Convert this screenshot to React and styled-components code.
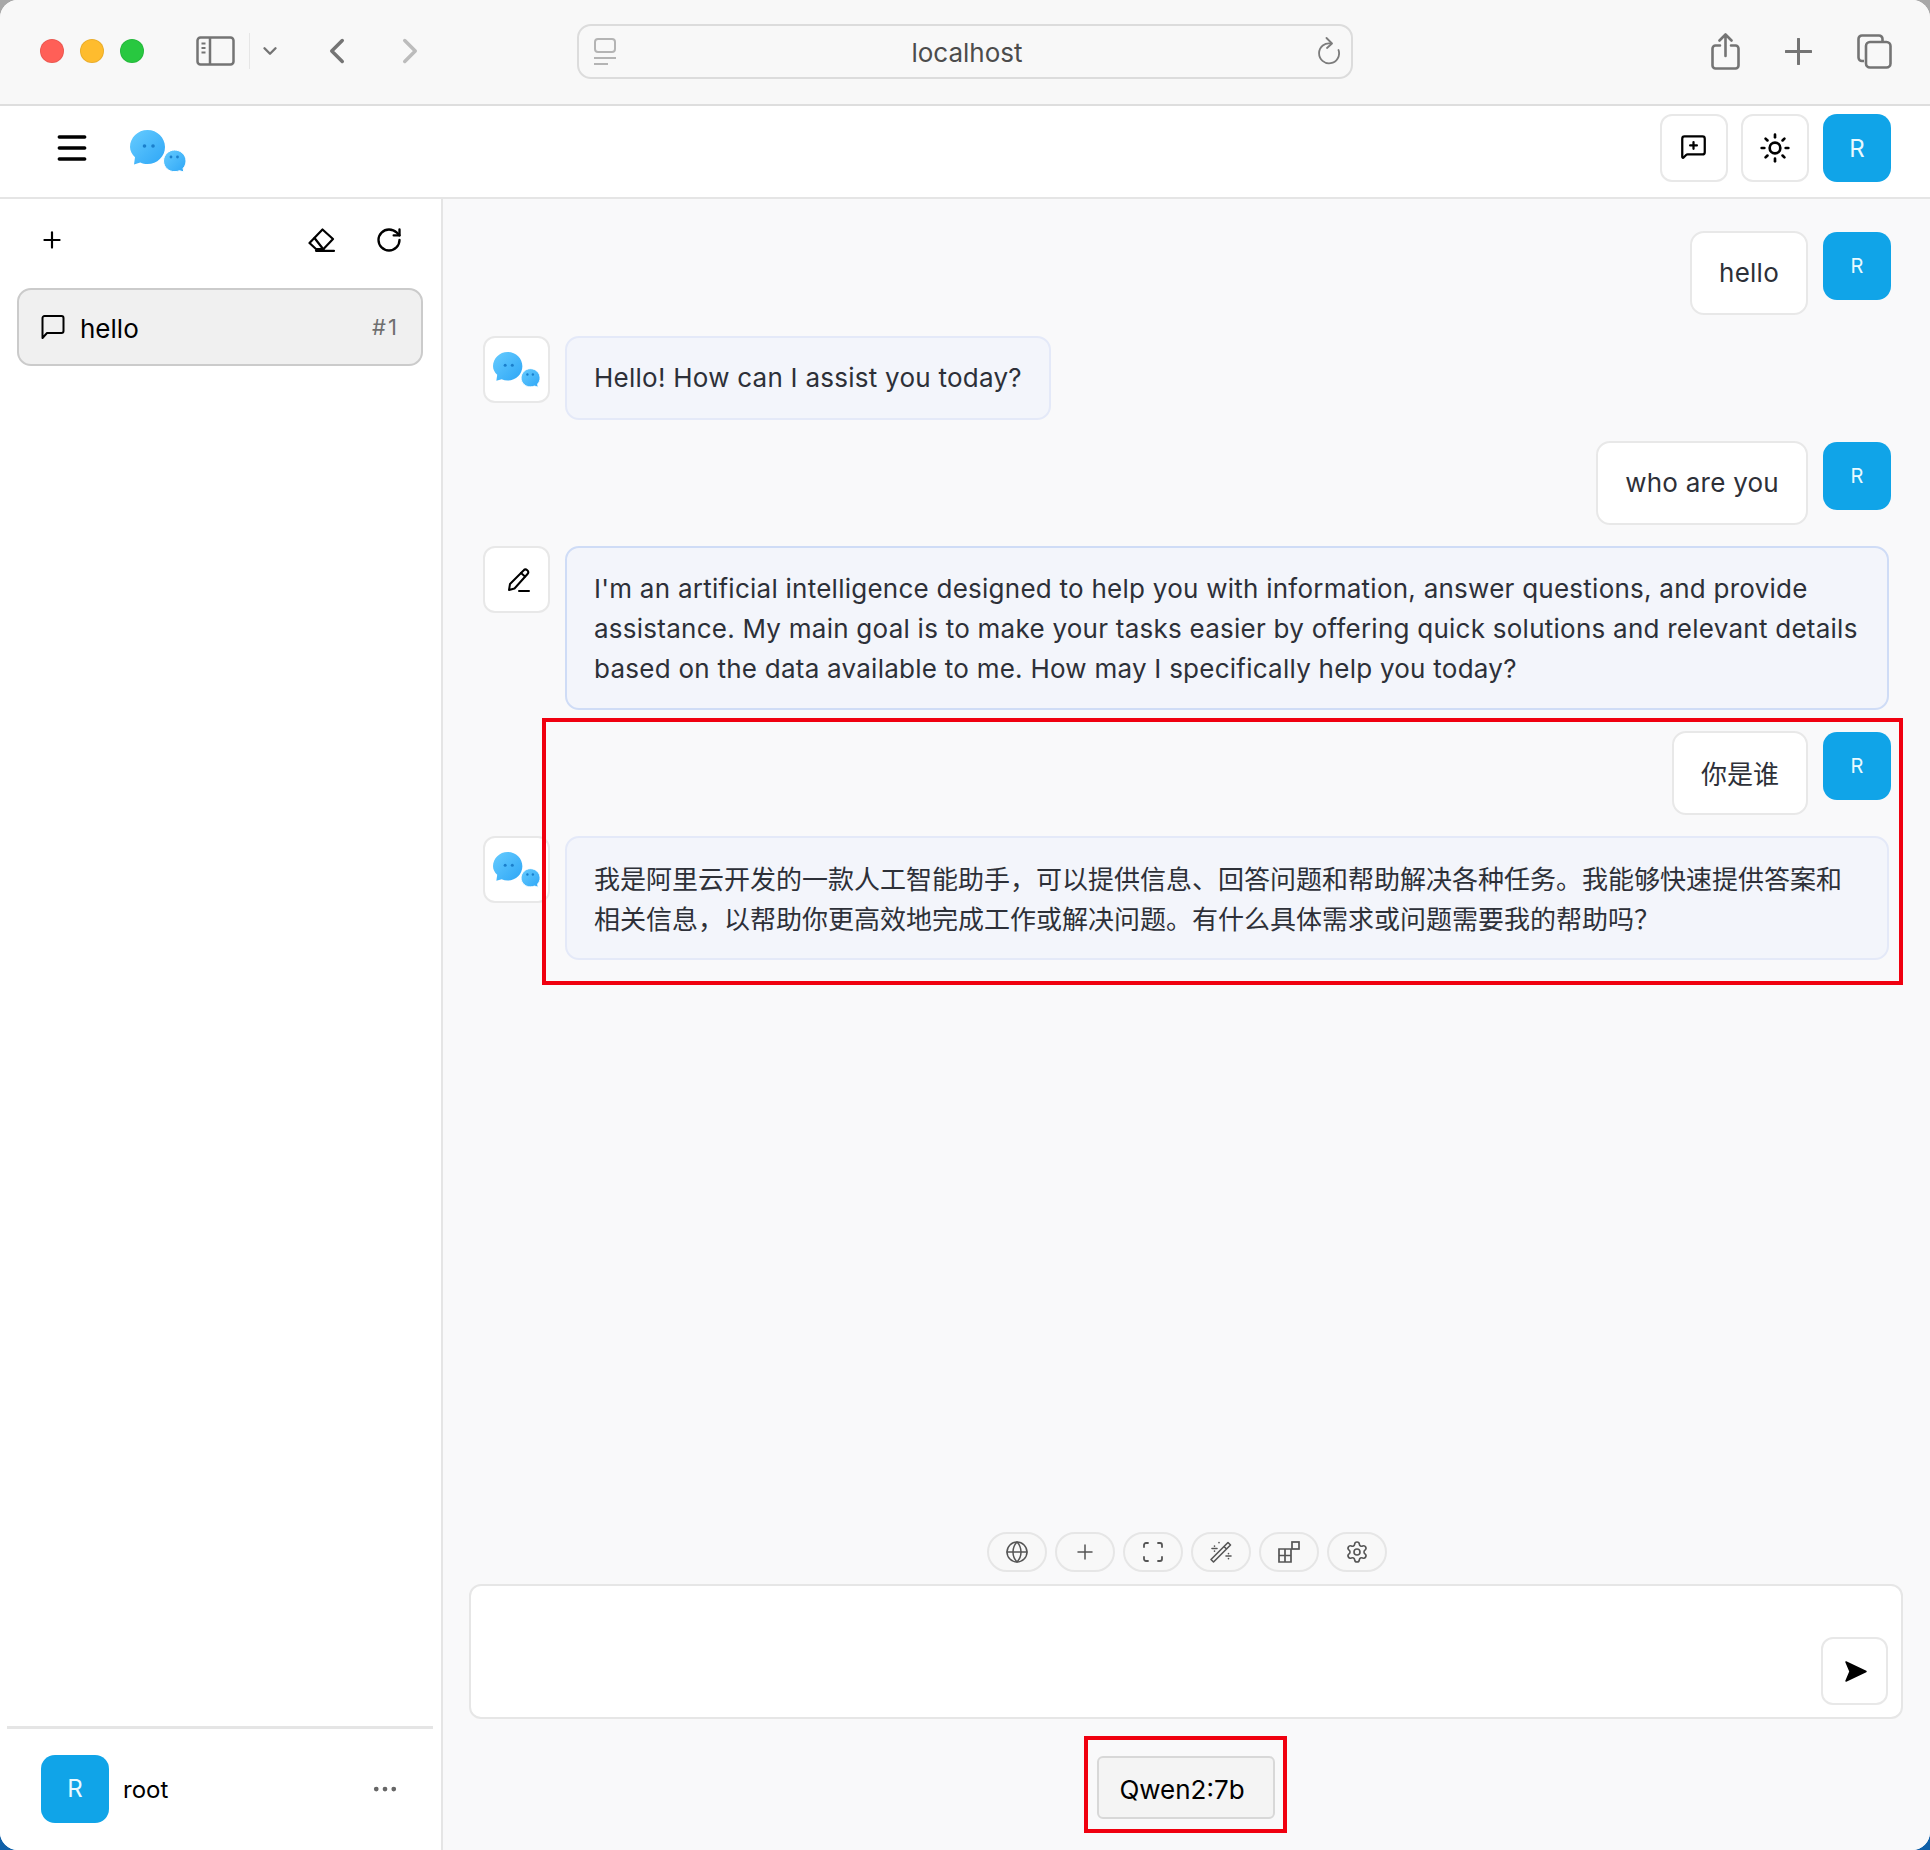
import React, { useId } from 'react';
import styled, { createGlobalStyle } from 'styled-components';
import {
  ChevronDown,
  ChevronLeft,
  ChevronRight,
  Ellipsis,
  Globe,
  Menu,
  MessageSquarePlus,
  Plus,
  RotateCw,
  Scan,
  Settings,
  Sun,
} from 'lucide-react';

const GlobalStyle = createGlobalStyle`
  html, body {
    margin: 0;
    padding: 0;
    height: 1850px;
    background: linear-gradient(#a8a8a8 0 50%, #0f5fa8 50% 100%);
  }
  * {
    box-sizing: border-box;
  }
`;

const Window = styled.div`
  position: relative;
  display: flex;
  flex-direction: column;
  width: 1930px;
  height: 1850px;
  border-radius: 18px;
  overflow: hidden;
  background: #fff;
  font-family: Inter, "Noto Sans CJK SC", sans-serif;
  color: #2d3038;
`;

const TitleBar = styled.div`
  display: flex;
  align-items: center;
  flex: none;
  height: 106px;
  padding: 0 0 2px 40px;
  background: #f8f8f8;
  border-bottom: 2px solid #dedede;
  color: #747474;
`;

const Light = styled.span`
  width: 24px;
  height: 24px;
  margin-right: 16px;
  border-radius: 50%;
  background: ${(p) => p.$color};
  border: 1px solid rgba(0, 0, 0, 0.08);
`;

const BarIcon = styled.span`
  display: flex;
  flex: none;
  margin-left: ${(p) => p.$left || 0}px;
  color: ${(p) => p.$color || 'inherit'};
`;

const VDivider = styled.span`
  width: 1px;
  height: 36px;
  margin-left: 14px;
  background: #e6e6e6;
`;

const AddressBar = styled.div`
  display: flex;
  align-items: center;
  justify-content: space-between;
  flex: none;
  position: relative;
  width: 776px;
  height: 55px;
  margin-left: 151px;
  padding: 0 11px 0 15px;
  border: 2px solid #dcdcdc;
  border-radius: 14px;
  color: #b4b4b4;
`;

const Address = styled.span`
  padding-top: 2px;
  font-size: 26px;
  color: #4c4c4c;
`;

const Header = styled.div`
  display: flex;
  align-items: flex-start;
  flex: none;
  height: 93px;
  padding: 8px 39px 0 56px;
  border-bottom: 2px solid #e5e5e5;
  background: #fff;
`;

const MenuButton = styled.span`
  display: flex;
  margin-top: 15px;
  color: #000;
`;

const HeaderLogo = styled.span`
  display: flex;
  margin: 16px auto 0 42px;
`;

const SquareButton = styled.button`
  display: flex;
  align-items: center;
  justify-content: center;
  flex: none;
  width: ${(p) => p.$w || 68}px;
  height: 68px;
  margin-right: ${(p) => p.$right || 0}px;
  padding: 0;
  border: 2px solid #e8e8e8;
  border-radius: 12px;
  background: ${(p) => p.$bg || '#fff'};
  color: #000;
`;

const Avatar = styled.div`
  display: flex;
  align-items: center;
  justify-content: center;
  flex: none;
  width: 68px;
  height: 68px;
  border-radius: 14px;
  background: #10a4e8;
  color: #eafaff;
  font-size: ${(p) => p.$size || 24}px;
`;

const Body = styled.div`
  display: flex;
  flex: 1;
  min-height: 0;
`;

const Sidebar = styled.aside`
  display: flex;
  flex-direction: column;
  flex: none;
  width: 443px;
  border-right: 2px solid #e5e5e5;
  background: #fff;
`;

const SideTools = styled.div`
  display: flex;
  align-items: center;
  height: 89px;
  padding: 0 39px 8px 39px;
  color: #000;
`;

const SideTool = styled.span`
  display: flex;
  margin-left: ${(p) => p.$left || 0}px;
`;

const ChatItem = styled.div`
  display: flex;
  align-items: center;
  height: 78px;
  margin: 0 18px 0 17px;
  padding: 0 22px;
  border: 2px solid #cbcbcb;
  border-radius: 14px;
  background: #f0f0f0;
  color: #000;
`;

const ChatName = styled.span`
  margin: 3px 0 0 15px;
  font-size: 26px;
  flex: 1;
`;

const ChatNumber = styled.span`
  font-size: 22px;
  letter-spacing: 2px;
  color: #6f6f6f;
`;

const SideFooter = styled.div`
  display: flex;
  align-items: center;
  margin: auto 8px 0 7px;
  height: 124px;
  padding: 0 33px 2px 34px;
  border-top: 3px solid #e5e5e5;
`;

const UserName = styled.span`
  flex: 1;
  margin: 2px 0 0 14px;
  font-size: 24px;
  color: #000;
`;

const Main = styled.main`
  display: flex;
  flex-direction: column;
  flex: 1;
  min-width: 0;
  background: #f9f9fa;
`;

const MessageList = styled.div`
  display: flex;
  flex-direction: column;
  flex: 1;
  gap: 21px;
  padding: 32px 39px 0 40px;
`;

const Row = styled.div`
  display: flex;
  align-items: flex-start;
  gap: 15px;
  justify-content: ${(p) => (p.$user ? 'flex-end' : 'flex-start')};

  ${Avatar} {
    margin-top: 1px;
  }
`;

const Bubble = styled.div`
  padding: ${(p) => (p.$cjk ? '22px 27px 18px' : p.$wide ? '21px 27px 19px' : '20px 27px')};
  font-size: 26px;
  line-height: 40px;
  letter-spacing: ${(p) => (p.$cjk ? 0 : 0.25)}px;
  border-radius: 14px;
  border: 2px solid ${(p) => (p.$user ? '#e8e8e8' : p.$strong ? '#cfdcf6' : '#e4e9f8')};
  background: ${(p) => (p.$user ? '#fff' : '#f3f5fb')};
  flex: ${(p) => (p.$wide ? 1 : 'none')};
  margin-right: ${(p) => (p.$wide ? 2 : 0)}px;
`;

const BotAvatar = styled.div`
  display: flex;
  align-items: center;
  justify-content: center;
  flex: none;
  width: 67px;
  height: 67px;
  border: 2px solid #e8e8e8;
  border-radius: 12px;
  background: #fff;
  color: #000;
`;

const PencilGlyph = styled.span`
  display: flex;
  margin-left: 4px;
`;

const Composer = styled.div`
  display: flex;
  flex-direction: column;
  align-items: center;
  flex: none;
  padding: 0 27px 31px 26px;
`;

const Pills = styled.div`
  display: flex;
  gap: 8px;
  margin: 0 0 12px 1px;
`;

const Pill = styled.button`
  display: flex;
  align-items: center;
  justify-content: center;
  width: 60px;
  height: 40px;
  padding: 0 0 0 1px;
  border: 2px solid #e6e6e6;
  border-radius: 20px;
  background: #f8f8f8;
  color: #555;
`;

const InputBox = styled.div`
  display: flex;
  align-items: flex-end;
  justify-content: flex-end;
  align-self: stretch;
  height: 135px;
  padding: 0 13px 12px 0;
  border: 2px solid #e6e6e6;
  border-radius: 12px;
  background: #fff;
`;

const SendGlyph = styled.span`
  display: flex;
  margin-left: 3px;
`;

const ModelButton = styled.button`
  width: 178px;
  height: 63px;
  margin-top: 37px;
  padding: 4px 8px 0 0;
  border: 2px solid #d8d8d8;
  border-radius: 6px;
  background: #f4f4f4;
  font-family: inherit;
  font-size: 26px;
  color: #000;
`;

const RedBox = styled.div`
  position: absolute;
  left: ${(p) => p.$x}px;
  top: ${(p) => p.$y}px;
  width: ${(p) => p.$w}px;
  height: ${(p) => p.$h}px;
  border: 4px solid #f0000f;
  pointer-events: none;
`;

function BubbleLogo({ width = 56, height = 42 }) {
  const id = useId();
  return (
    <svg width={width} height={height} viewBox="0 0 56 42">
      <defs>
        <linearGradient id={id} x1="0" y1="0" x2="1" y2="1">
          <stop offset="0" stopColor="#66ccff" />
          <stop offset="1" stopColor="#2ea6f6" />
        </linearGradient>
      </defs>
      <path
        d="M17.5 0C27.2 0 35 7.6 35 17c0 9.5-7.8 17-17.5 17-2.6 0-5-.5-7.2-1.5L4 34.5l1-7.2C2 24.3 0 20.900 0 17 0 7.600 7.800 0 17.500 0z"
        fill={`url(#${id})`}
      />
      <path
        d="M44.500 20C50.800 20 56 24.800 56 31c0 2.900-1.100 5.400-2.900 7.400l.7 3.600-4.300-1.300c-1.400.6-2.900.9-4.500.9C38.700 42 33.500 37 33.500 31s5.200-11 11-11z"
        fill={`url(#${id})`}
        stroke="#fff"
        strokeWidth="1"
      />
      <circle cx="14.500" cy="16" r="1.800" fill="#1b7fcb" />
      <circle cx="23" cy="16" r="1.800" fill="#1b7fcb" />
      <circle cx="41" cy="27" r="1.400" fill="#1b7fcb" />
      <circle cx="47.500" cy="27" r="1.400" fill="#1b7fcb" />
    </svg>
  );
}

function PanelIcon() {
  return (
    <svg width="39" height="30" viewBox="0 0 39 30" fill="none" stroke="currentColor" strokeWidth="2.500">
      <rect x="1.500" y="1.500" width="36" height="27" rx="3" />
      <path d="M14 1.500v27" />
      <path d="M5.500 7.500h4M5.500 12h4M5.500 16.500h4" strokeWidth="2" />
    </svg>
  );
}

function PageIcon() {
  return (
    <svg width="22" height="27" viewBox="0 0 22 27" fill="none" stroke="currentColor" strokeWidth="2">
      <rect x="1" y="1" width="20" height="13" rx="3" />
      <path d="M0 20h22M0 26h14" />
    </svg>
  );
}

function ReloadIcon() {
  return (
    <svg width="22" height="28" viewBox="0 0 22 28" fill="none" stroke="currentColor" strokeWidth="1.800">
      <path d="M13 6.500A10 10 0 1 0 20.500 13" strokeLinecap="round" />
      <path d="M8.500 1l5.500 5.500-5 4.500" strokeLinecap="round" strokeLinejoin="round" />
    </svg>
  );
}

function ShareIcon() {
  return (
    <svg width="29" height="37" viewBox="0 0 29 37" fill="none" stroke="currentColor" strokeWidth="2.600" strokeLinecap="round" strokeLinejoin="round">
      <path d="M9 12.500H4.500a3 3 0 0 0-3 3v17a3 3 0 0 0 3 3h20a3 3 0 0 0 3-3v-17a3 3 0 0 0-3-3H20" />
      <path d="M14.500 23V2M8.500 7.500l6-6 6 6" />
    </svg>
  );
}

function NewTabIcon() {
  return (
    <svg width="27" height="27" viewBox="0 0 27 27" fill="none" stroke="currentColor" strokeWidth="3" strokeLinecap="round">
      <path d="M13.500 1v25M1 13.500h25" />
    </svg>
  );
}

function TabsIcon() {
  return (
    <svg width="35" height="35" viewBox="0 0 35 35" fill="none" stroke="currentColor" strokeWidth="2.600">
      <path d="M7 27H5a3.500 3.500 0 0 1-3.500-3.500V5A3.500 3.500 0 0 1 5 1.500h17A3.500 3.500 0 0 1 25.500 5v2" />
      <rect x="9" y="8" width="24.500" height="25.500" rx="4" />
    </svg>
  );
}

function EraserIcon() {
  return (
    <svg width="27" height="24" viewBox="0 0 27 24" fill="none" stroke="currentColor" strokeWidth="2.200" strokeLinejoin="round" strokeLinecap="round">
      <path d="M14.500 1.500l10.500 9.500-9.500 10H8L1.500 15z" />
      <path d="M6.500 10l9 11.500M8 22.800h18" />
    </svg>
  );
}

function WandIcon() {
  return (
    <svg width="24" height="24" viewBox="0 0 24 24" fill="none" stroke="currentColor" strokeWidth="1.600" strokeLinecap="round" strokeLinejoin="round">
      <path d="M2 19.500L19 2.500l2.500 2.500-17 17zM15 6.500l2.500 2.500" />
      <path d="M3 8.500h5M5.500 6v.2M5.500 11v.2M10 2.500v.2M17 16h5M19.500 13.500v.2M19.500 18.500v.2" />
    </svg>
  );
}

function AppsIcon() {
  return (
    <svg width="22" height="22" viewBox="0 0 22 22" fill="none" stroke="currentColor" strokeWidth="1.700">
      <path d="M1 8h12v13H1zM1 14.500h12M7 8v13" />
      <rect x="14" y="1" width="7" height="7" />
    </svg>
  );
}

function SendIcon() {
  return (
    <svg width="22" height="21" viewBox="0 0 22 21" fill="#000" stroke="#000" strokeWidth="1.500" strokeLinejoin="round">
      <path d="M1 1l20 9.500L1 20l4-9.500z" />
    </svg>
  );
}

function ChatBubbleIcon() {
  return (
    <svg width="24" height="24" viewBox="0 0 24 24" fill="none" stroke="currentColor" strokeWidth="2" strokeLinejoin="round">
      <path d="M1.500 23V3a2 2 0 0 1 2-2h17a2 2 0 0 1 2 2v13a2 2 0 0 1-2 2H6z" />
    </svg>
  );
}

function PencilIcon() {
  return (
    <svg width="24" height="24" viewBox="0 0 24 24" fill="none" stroke="currentColor" strokeWidth="2" strokeLinejoin="round" strokeLinecap="round">
      <path d="M2 22l1-6L16.500 2.500a2.300 2.300 0 0 1 4 3.500L7.500 20.500z" />
      <path d="M14 5l4 3.500M12 23h10" />
    </svg>
  );
}

export default function App() {
  return (
    <>
      <GlobalStyle />
      <Window>
        <TitleBar>
          <Light $color="#ff5f57" />
          <Light $color="#febc2e" />
          <Light $color="#28c840" />
          <BarIcon $left={36}><PanelIcon /></BarIcon>
          <VDivider />
          <BarIcon $left={9}><ChevronDown size={22} strokeWidth={2.600} /></BarIcon>
          <BarIcon $left={40}><ChevronLeft size={42} strokeWidth={2} style={{ margin: '0 -5px' }} /></BarIcon>
          <BarIcon $left={41} $color="#bcbcbc"><ChevronRight size={42} strokeWidth={2} style={{ margin: '0 -5px' }} /></BarIcon>
          <AddressBar>
            <PageIcon />
            <Address>localhost</Address>
            <BarIcon $color="#7c7c7c"><ReloadIcon /></BarIcon>
          </AddressBar>
          <BarIcon $left={358}><ShareIcon /></BarIcon>
          <BarIcon $left={45}><NewTabIcon /></BarIcon>
          <BarIcon $left={45}><TabsIcon /></BarIcon>
        </TitleBar>
        <Header>
          <MenuButton><Menu size={38} strokeWidth={2.200} style={{ margin: '0 -3px' }} /></MenuButton>
          <HeaderLogo><BubbleLogo /></HeaderLogo>
          <SquareButton $right={13}><MessageSquarePlus size={27} strokeWidth={2} style={{ margin: '0 2px 3px 0' }} /></SquareButton>
          <SquareButton $right={14}><Sun size={32} strokeWidth={2} /></SquareButton>
          <Avatar>R</Avatar>
        </Header>
        <Body>
          <Sidebar>
            <SideTools>
              <SideTool><Plus size={26} strokeWidth={2} /></SideTool>
              <SideTool $left={243}><EraserIcon /></SideTool>
              <SideTool $left={40}><RotateCw size={28} strokeWidth={2} /></SideTool>
            </SideTools>
            <ChatItem>
              <ChatBubbleIcon />
              <ChatName>hello</ChatName>
              <ChatNumber>#1</ChatNumber>
            </ChatItem>
            <SideFooter>
              <Avatar>R</Avatar>
              <UserName>root</UserName>
              <Ellipsis size={30} color="#666" strokeWidth={1.800} />
            </SideFooter>
          </Sidebar>
          <Main>
            <MessageList>
              <Row $user>
                <Bubble $user>hello</Bubble>
                <Avatar $size={20}>R</Avatar>
              </Row>
              <Row>
                <BotAvatar><BubbleLogo width={47} height={39} /></BotAvatar>
                <Bubble>Hello! How can I assist you today?</Bubble>
              </Row>
              <Row $user>
                <Bubble $user>who are you</Bubble>
                <Avatar $size={20}>R</Avatar>
              </Row>
              <Row>
                <BotAvatar><PencilGlyph><PencilIcon /></PencilGlyph></BotAvatar>
                <Bubble $wide $strong>
                  I'm an artificial intelligence designed to help you with information, answer questions, and provide assistance. My main goal is to make your tasks easier by offering quick solutions and relevant details based on the data available to me. How may I specifically help you today?
                </Bubble>
              </Row>
              <Row $user>
                <Bubble $user $cjk>你是谁</Bubble>
                <Avatar $size={20}>R</Avatar>
              </Row>
              <Row>
                <BotAvatar><BubbleLogo width={47} height={39} /></BotAvatar>
                <Bubble $wide $cjk>
                  我是阿里云开发的一款人工智能助手，可以提供信息、回答问题和帮助解决各种任务。我能够快速提供答案和相关信息，以帮助你更高效地完成工作或解决问题。有什么具体需求或问题需要我的帮助吗？
                </Bubble>
              </Row>
            </MessageList>
            <Composer>
              <Pills>
                <Pill><Globe size={24} strokeWidth={1.500} /></Pill>
                <Pill><Plus size={24} strokeWidth={1.500} /></Pill>
                <Pill><Scan size={24} strokeWidth={1.800} /></Pill>
                <Pill><WandIcon /></Pill>
                <Pill><AppsIcon /></Pill>
                <Pill><Settings size={24} strokeWidth={1.600} /></Pill>
              </Pills>
              <InputBox>
                <SquareButton $w={67}><SendGlyph><SendIcon /></SendGlyph></SquareButton>
              </InputBox>
              <ModelButton>Qwen2:7b</ModelButton>
            </Composer>
          </Main>
        </Body>
        <RedBox $x={542} $y={718} $w={1361} $h={267} />
        <RedBox $x={1084} $y={1736} $w={203} $h={97} />
      </Window>
    </>
  );
}
